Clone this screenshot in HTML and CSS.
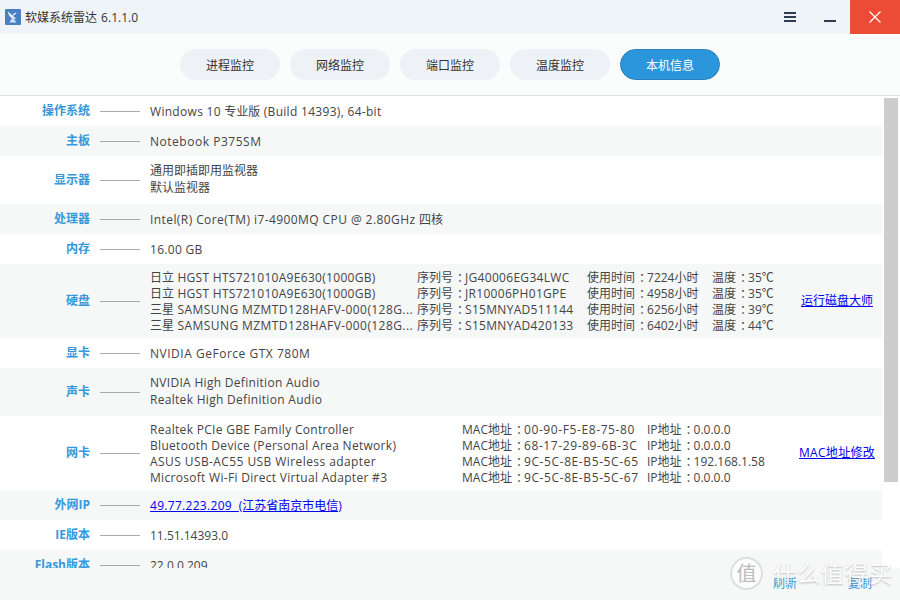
FILE: index.html
```html
<!DOCTYPE html>
<html lang="zh-CN">
<head>
<meta charset="utf-8">
<title>软媒系统雷达</title>
<link rel="stylesheet" href="styles.css">
</head>
<body>
<div class="app">
  <header class="titlebar">
    <div class="brand">
      <svg class="logo" width="16" height="16" viewBox="0 0 16 16"><rect width="16" height="16" rx="1" fill="#4a7fc4"/><path d="M3 2.500c0 4 3 7.500 8.500 7.500L3 2.500z" fill="#e8f0fa"/><path d="M7 9l-2.500 4.500h7L8.500 9.500z" fill="#cfe0f4"/><path d="M7.500 6.500L11 4" stroke="#e8f0fa" stroke-width="1.300"/></svg>
      <span class="app-title">软媒系统雷达 6.1.1.0</span>
    </div>
    <div class="win-controls">
      <button class="win-btn" aria-label="菜单"><svg width="12" height="10" viewBox="0 0 12 10"><path d="M0 0h12v2H0zM0 4h12v2H0zM0 8h12v2H0z" fill="#2c3e50"/></svg></button>
      <button class="win-btn" aria-label="最小化"><svg width="12" height="10" viewBox="0 0 12 10"><path d="M0 8h12v2H0z" fill="#2c3e50"/></svg></button>
      <button class="win-btn close" aria-label="关闭"><svg width="12" height="12" viewBox="0 0 12 12"><path d="M.5.500l11 11M11.500.500l-11 11" stroke="#fff" stroke-width="1.200" fill="none"/></svg></button>
    </div>
  </header>
  <nav class="tabs">
    <a class="tab">进程监控</a>
    <a class="tab">网络监控</a>
    <a class="tab">端口监控</a>
    <a class="tab">温度监控</a>
    <a class="tab active">本机信息</a>
  </nav>
  <main class="body">
    <div class="list">
      <div class="row"><div class="label">操作系统</div><div class="rule"></div><div class="value">Windows 10 <span class="plain">专业版</span> (Build 14393), 64-bit</div></div>
      <div class="row alt"><div class="label">主板</div><div class="rule"></div><div class="value wide">Notebook P375SM</div></div>
      <div class="row double"><div class="label">显示器</div><div class="rule"></div><div class="value"><div class="plain">通用即插即用监视器</div><div class="plain">默认监视器</div></div></div>
      <div class="row alt"><div class="label">处理器</div><div class="rule"></div><div class="value cpu">Intel(R) Core(TM) i7-4900MQ CPU @ 2.80GHz <span class="plain">四核</span></div></div>
      <div class="row"><div class="label">内存</div><div class="rule"></div><div class="value">16.00 GB</div></div>
      <div class="row alt quad"><div class="label">硬盘</div><div class="rule"></div>
        <div class="value disks">
          <span><span class="plain">日立</span> HGST HTS721010A9E630(1000GB)</span><span><span class="plain">序列号<i class="colon">：</i></span>JG40006EG34LWC</span><span class="plain">使用时间<i class="colon">：</i>7224小时</span><span class="plain">温度<i class="colon">：</i>35℃</span>
          <span><span class="plain">日立</span> HGST HTS721010A9E630(1000GB)</span><span><span class="plain">序列号<i class="colon">：</i></span>JR10006PH01GPE</span><span class="plain">使用时间<i class="colon">：</i>4958小时</span><span class="plain">温度<i class="colon">：</i>35℃</span>
          <span class="cpu"><span class="plain">三星</span> SAMSUNG MZMTD128HAFV-000(128G...</span><span><span class="plain">序列号<i class="colon">：</i></span>S15MNYAD511144</span><span class="plain">使用时间<i class="colon">：</i>6256小时</span><span class="plain">温度<i class="colon">：</i>39℃</span>
          <span class="cpu"><span class="plain">三星</span> SAMSUNG MZMTD128HAFV-000(128G...</span><span><span class="plain">序列号<i class="colon">：</i></span>S15MNYAD420133</span><span class="plain">使用时间<i class="colon">：</i>6402小时</span><span class="plain">温度<i class="colon">：</i>44℃</span>
        </div>
        <a class="link side-disk" href="#">运行磁盘大师</a>
      </div>
      <div class="row"><div class="label">显卡</div><div class="rule"></div><div class="value wide">NVIDIA GeForce GTX 780M</div></div>
      <div class="row alt double"><div class="label">声卡</div><div class="rule"></div><div class="value"><div>NVIDIA High Definition Audio</div><div>Realtek High Definition Audio</div></div></div>
      <div class="row quad"><div class="label">网卡</div><div class="rule"></div>
        <div class="value nics">
          <span>Realtek PCIe GBE Family Controller</span><span class="plain">MAC地址<i class="colon">：</i><span class="mac">00-90-F5-E8-75-80</span></span><span class="plain">IP地址<i class="colon">：</i>0.0.0.0</span>
          <span>Bluetooth Device (Personal Area Network)</span><span class="plain">MAC地址<i class="colon">：</i><span class="mac">68-17-29-89-6B-3C</span></span><span class="plain">IP地址<i class="colon">：</i>0.0.0.0</span>
          <span class="cpu">ASUS USB-AC55 USB Wireless adapter</span><span class="plain">MAC地址<i class="colon">：</i><span class="mac">9C-5C-8E-B5-5C-65</span></span><span class="plain">IP地址<i class="colon">：</i>192.168.1.58</span>
          <span>Microsoft Wi-Fi Direct Virtual Adapter #3</span><span class="plain">MAC地址<i class="colon">：</i><span class="mac">9C-5C-8E-B5-5C-67</span></span><span class="plain">IP地址<i class="colon">：</i>0.0.0.0</span>
        </div>
        <a class="link side-nic" href="#">MAC地址修改</a>
      </div>
      <div class="row alt"><div class="label">外网IP</div><div class="rule"></div><div class="value"><a class="link" href="#">49.77.223.209&nbsp; <span class="plain">(江苏省南京市电信)</span></a></div></div>
      <div class="row"><div class="label">IE版本</div><div class="rule"></div><div class="value plain">11.51.14393.0</div></div>
      <div class="row alt"><div class="label">Flash版本</div><div class="rule"></div><div class="value plain">22.0.0.209</div></div>
    </div>
    <div class="scrollbar"><div class="thumb"></div></div>
  </main>
  <footer class="footer">
    <a class="foot-link">刷新</a>
    <a class="foot-link">复制</a>
  </footer>
  <div class="watermark"><span class="wm-badge">值</span><span class="wm-text">什么值得买</span></div>
</div>
</body>
</html>
```

FILE: styles.css
```css
* { box-sizing: border-box; }
html, body { margin: 0; padding: 0; }
body {
  width: 900px;
  height: 600px;
  overflow: hidden;
  font-family: "Open Sans", "Noto Sans CJK SC", sans-serif;
  font-size: 12px;
  color: #444;
}
.app {
  position: relative;
  width: 900px;
  height: 600px;
  display: flex;
  flex-direction: column;
  background: #fff;
}
.titlebar {
  height: 34px;
  flex: none;
  background: #eff4f8;
  display: flex;
  justify-content: space-between;
}
.brand { display: flex; align-items: center; padding-left: 5px; gap: 4px; }
.logo { display: block; }
.app-title { font-size: 12px; color: #333; word-spacing: 1px; }
.win-controls { display: flex; }
.win-btn {
  width: 40px;
  height: 34px;
  padding: 0;
  border: 0;
  background: none;
  display: flex;
  align-items: center;
  justify-content: center;
}
.win-btn.close { width: 50px; background: #ec4c35; }
.tabs {
  height: 62px;
  flex: none;
  background: #fbfdfc;
  border-bottom: 1px solid #e0e0e0;
  padding-top: 15px;
  display: flex;
  justify-content: center;
  align-items: flex-start;
  gap: 10px;
}
.tab {
  width: 100px;
  height: 31px;
  border-radius: 16px;
  background: #eef2f6;
  color: #333;
  display: flex;
  align-items: center;
  justify-content: center;
}
.tab.active {
  background: #2c96dd;
  border: 1px solid #2a80ba;
  color: #fff;
}
.body {
  flex: 1;
  min-height: 0;
  display: flex;
  overflow: hidden;
}
.list { width: 882px; flex: none; }
.row {
  display: grid;
  grid-template-columns: 90px 40px 1fr;
  column-gap: 10px;
  align-items: center;
  height: 30px;
  position: relative;
  line-height: 16px;
}
.row.alt { background: #f6f8f8; }
.row.double { height: 48px; }
.row.quad { height: 74px; }
.label {
  text-align: right;
  font-weight: 700;
  color: #3498db;
}
.rule { height: 1px; background: #aaa; }
.value { letter-spacing: .3px; padding-top: 1px; }
.value.wide { letter-spacing: .52px; }
.cpu { letter-spacing: .42px; }
.double .value { line-height: 17px; padding: 0 0 2px; }
.value.plain, .plain { letter-spacing: 0; }
.mac { letter-spacing: .6px; }
.colon { font-style: normal; padding-left: 4px; letter-spacing: -4px; }
.disks {
  display: grid;
  grid-template-columns: 267px 170px 125px auto;
  justify-content: start;
}
.nics {
  display: grid;
  grid-template-columns: 312px 185px auto;
  justify-content: start;
}
.value span { white-space: nowrap; }
.link { color: #00e; text-decoration: underline; }
.side-disk, .side-nic { position: absolute; top: 29px; }
.side-disk { left: 801px; }
.side-nic { left: 799px; letter-spacing: .3px; }
.scrollbar { width: 18px; flex: none; padding: 2px 2px 0; }
.thumb { height: 384px; background: #cdcdcd; }
.footer {
  height: 32px;
  flex: none;
  background: #f6f8f8;
  position: relative;
  display: flex;
  justify-content: flex-end;
  gap: 51px;
  padding: 8px 28px 0 0;
}
.foot-link { color: #3498db; text-decoration: none; line-height: 16px; }
.watermark {
  position: absolute;
  left: 730px;
  top: 557px;
  display: flex;
  align-items: center;
  gap: 10px;
  color: #fff;
  pointer-events: none;
}
.wm-badge {
  width: 33px;
  height: 33px;
  border-radius: 50%;
  background: rgba(255,255,255,.75);
  border: 2px solid rgba(200,200,200,.6);
  color: #bbb;
  font-size: 20px;
  line-height: 29px;
  text-align: center;
}
.wm-text {
  font-size: 23px;
  line-height: 33px;
  letter-spacing: 1px;
  text-shadow: 0 1px 2px rgba(120,120,120,.55);
  opacity: .85;
}
```
